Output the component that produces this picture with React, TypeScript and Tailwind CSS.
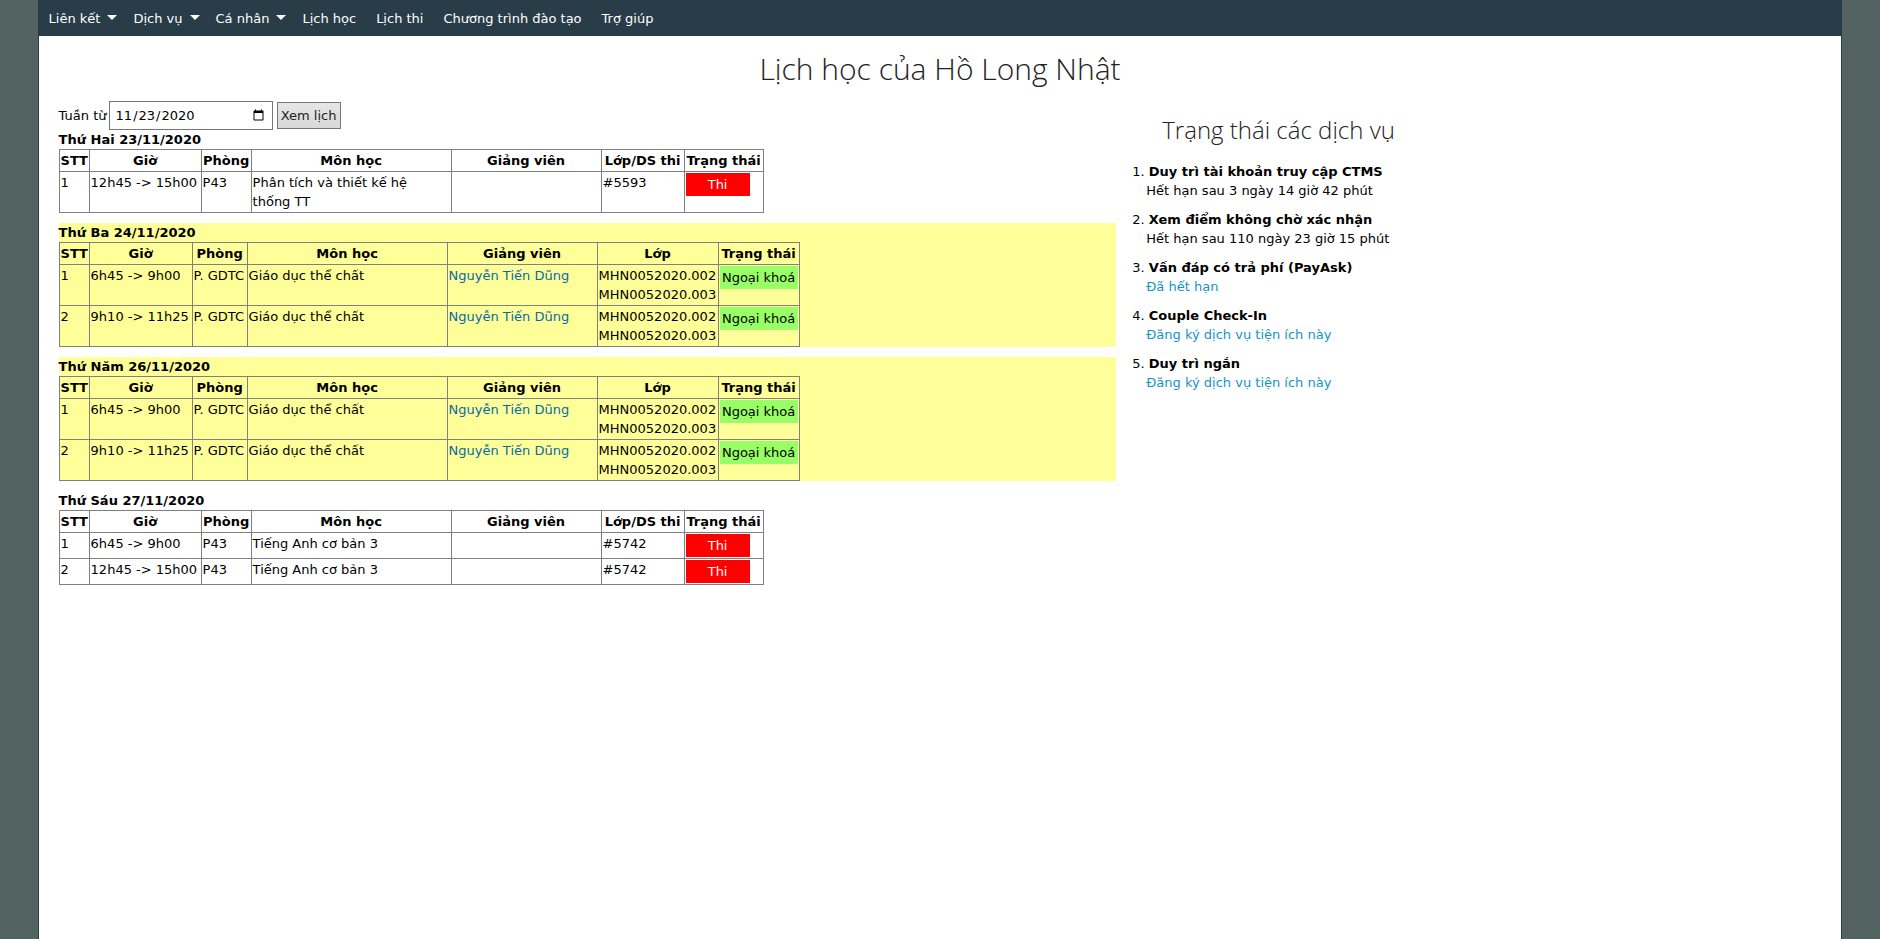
const menu = [
  { label: "Liên kết", drop: true },
  { label: "Dịch vụ", drop: true },
  { label: "Cá nhân", drop: true },
  { label: "Lịch học" },
  { label: "Lịch thi" },
  { label: "Chương trình đào tạo" },
  { label: "Trợ giúp" },
];

type Row = { time: string; room: string; subject: string; teacher?: string; classes: string[] };
type Day = { title: string; extra: boolean; rows: Row[] };

const pe: Row[] = [
  { time: "6h45 -> 9h00", room: "P. GDTC", subject: "Giáo dục thể chất", teacher: "Nguyễn Tiến Dũng", classes: ["MHN0052020.002", "MHN0052020.003"] },
  { time: "9h10 -> 11h25", room: "P. GDTC", subject: "Giáo dục thể chất", teacher: "Nguyễn Tiến Dũng", classes: ["MHN0052020.002", "MHN0052020.003"] },
];

const days: Day[] = [
  {
    title: "Thứ Hai 23/11/2020",
    extra: false,
    rows: [{ time: "12h45 -> 15h00", room: "P43", subject: "Phân tích và thiết kế hệ thống TT", classes: ["#5593"] }],
  },
  { title: "Thứ Ba 24/11/2020", extra: true, rows: pe },
  { title: "Thứ Năm 26/11/2020", extra: true, rows: pe },
  {
    title: "Thứ Sáu 27/11/2020",
    extra: false,
    rows: [
      { time: "6h45 -> 9h00", room: "P43", subject: "Tiếng Anh cơ bản 3", classes: ["#5742"] },
      { time: "12h45 -> 15h00", room: "P43", subject: "Tiếng Anh cơ bản 3", classes: ["#5742"] },
    ],
  },
];

const examCols = ["w-[30px]", "w-[112px]", "w-[50px]", "w-[200px]", "w-[150px]", "w-[83px]", "w-[79px]"];
const extraCols = ["w-[30px]", "w-[103px]", "w-[55px]", "w-[200px]", "w-[150px]", "w-[121px]", "w-[81px]"];

const services = [
  { name: "Duy trì tài khoản truy cập CTMS", status: "Hết hạn sau 3 ngày 14 giờ 42 phút" },
  { name: "Xem điểm không chờ xác nhận", status: "Hết hạn sau 110 ngày 23 giờ 15 phút" },
  { name: "Vấn đáp có trả phí (PayAsk)", status: "Đã hết hạn", link: true },
  { name: "Couple Check-In", status: "Đăng ký dịch vụ tiện ích này", link: true },
  { name: "Duy trì ngắn", status: "Đăng ký dịch vụ tiện ích này", link: true },
];

function DayTable({ day }: { day: Day }) {
  const cols = day.extra ? extraCols : examCols;
  const heads = ["STT", "Giờ", "Phòng", "Môn học", "Giảng viên", day.extra ? "Lớp" : "Lớp/DS thi", "Trạng thái"];
  const cell = "border border-[#808080] p-px align-top";
  return (
    <section className={day.extra ? "bg-[#ffff99]" : ""}>
      <h3 className="font-bold">{day.title}</h3>
      <table className={`table-fixed border-collapse whitespace-nowrap ${day.extra ? "w-[741px]" : "w-[705px]"}`}>
        <colgroup>
          {cols.map((c, i) => (
            <col key={i} className={c} />
          ))}
        </colgroup>
        <thead>
          <tr>
            {heads.map((h) => (
              <th key={h} className="border border-[#808080] p-px text-center font-bold">{h}</th>
            ))}
          </tr>
        </thead>
        <tbody>
          {day.rows.map((r, i) => (
            <tr key={i}>
              <td className={cell}>{i + 1}</td>
              <td className={cell}>{r.time}</td>
              <td className={cell}>{r.room}</td>
              <td className={`${cell} whitespace-normal`}>
                <div className="pr-2">{r.subject}</div>
              </td>
              <td className={cell}>{r.teacher && <a href="#" className="text-[#076aa5]">{r.teacher}</a>}</td>
              <td className={cell}>
                {r.classes.map((c) => (
                  <div key={c}>{c}</div>
                ))}
              </td>
              <td className={cell}>
                {day.extra ? (
                  <div className="bg-[#99ff66] py-0.5 text-center">Ngoại khoá</div>
                ) : (
                  <div className="w-16 bg-[#ff0000] py-0.5 text-center text-white">Thi</div>
                )}
              </td>
            </tr>
          ))}
        </tbody>
      </table>
    </section>
  );
}

export default function App() {
  return (
    <div className="min-h-screen bg-[#536362] px-[2%] font-['Verdana','DejaVu_Sans',sans-serif] text-[13px] leading-[19px] text-black">
      <div className="flex min-h-screen flex-col border-x border-[#283d48] bg-white">
        <nav className="flex h-9 items-center bg-[#283d48] text-white">
          {menu.map((m) => (
            <a key={m.label} href="#" className="flex items-center gap-[7px] px-2.5 whitespace-nowrap">
              {m.label}
              {m.drop && (
                <svg width="10" height="5" viewBox="0 0 10 5" className="-mt-0.5 -mr-1" aria-hidden="true">
                  <path d="M0 0h10L5 5z" fill="currentColor" />
                </svg>
              )}
            </a>
          ))}
        </nav>
        <main className="px-5">
          <h1 className="mt-3 text-center font-['Open_Sans',sans-serif] text-[30px] leading-[42px] font-light text-[#222]">
            Lịch học của Hồ Long Nhật
          </h1>
          <div className="mt-2.5 flex items-start gap-4">
            <div className="w-3/5 shrink-0">
              <form className="mt-px flex h-[29px] items-center" onSubmit={(e) => e.preventDefault()}>
                <label htmlFor="week" className="w-[50px] whitespace-nowrap">Tuần từ</label>
                <input id="week" type="date" defaultValue="2020-11-23" className="h-[29px] w-[164px] border border-[#767676] bg-white px-[5px]" />
                <button type="submit" className="ml-1 h-[27px] w-16 border border-[#767676] bg-linear-to-b from-[#e6e6e6] to-[#d9d9d9] whitespace-nowrap text-[#222]">
                  Xem lịch
                </button>
              </form>
              <div className="flex flex-col gap-2.5">
                {days.map((d) => (
                  <DayTable key={d.title} day={d} />
                ))}
              </div>
            </div>
            <aside>
              <h2 className="mt-3 ml-[30px] font-['Open_Sans',sans-serif] text-2xl leading-[36px] font-light text-[#222]">
                Trạng thái các dịch vụ
              </h2>
              <ol className="mt-3.5 flex flex-col gap-2.5">
                {services.map((s, i) => (
                  <li key={s.name}>
                    <div>
                      {i + 1}. <b>{s.name}</b>
                    </div>
                    <div className="pl-3.5">
                      {s.link ? <a href="#" className="text-[#1295c9]">{s.status}</a> : s.status}
                    </div>
                  </li>
                ))}
              </ol>
            </aside>
          </div>
        </main>
      </div>
    </div>
  );
}
